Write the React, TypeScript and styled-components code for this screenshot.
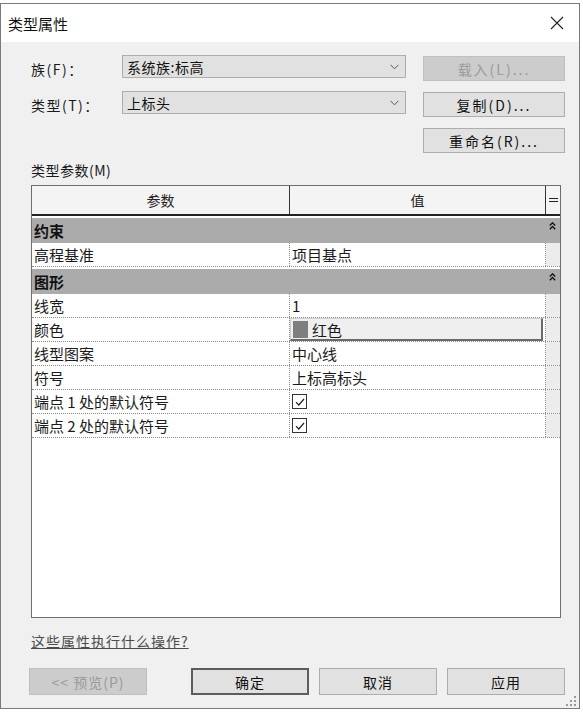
import React from 'react';
import styled, { createGlobalStyle } from 'styled-components';

const GlobalStyle = createGlobalStyle`
  html, body {
    margin: 0;
    padding: 0;
    background: #ffffff;
  }
  body {
    font-family: "Noto Sans CJK SC", "Noto Sans", sans-serif;
    color: #1a1a1a;
  }
`;

type Param = { name: string; value?: string; kind?: 'text' | 'color' | 'check' };

const groups: { title: string; rows: Param[] }[] = [
  { title: '约束', rows: [{ name: '高程基准', value: '项目基点' }] },
  {
    title: '图形',
    rows: [
      { name: '线宽', value: '1' },
      { name: '颜色', value: '红色', kind: 'color' },
      { name: '线型图案', value: '中心线' },
      { name: '符号', value: '上标高标头' },
      { name: '端点 1 处的默认符号', kind: 'check' },
      { name: '端点 2 处的默认符号', kind: 'check' },
    ],
  },
];

const App: React.FC = () => {
  return (
    <>
      <GlobalStyle />
      <Window>
        <TitleBar>
          <Title>类型属性</Title>
          <CloseButton>
            <svg width="14" height="14" viewBox="0 0 14 14">
              <path d="M1 1 L13 13 M13 1 L1 13" stroke="#222" strokeWidth="1.1" fill="none" />
            </svg>
          </CloseButton>
        </TitleBar>
        <Body>
          <TopGrid>
            <FieldLabel>族(F)：</FieldLabel>
            <Combo>
              <span>系统族:标高</span>
              <Chevron />
            </Combo>
            <SideButton disabled>载入(L)...</SideButton>

            <FieldLabel>类型(T)：</FieldLabel>
            <Combo>
              <span>上标头</span>
              <Chevron />
            </Combo>
            <SideButton>复制(D)...</SideButton>

            <span />
            <span />
            <SideButton>重命名(R)...</SideButton>
          </TopGrid>

          <SectionLabel>类型参数(M)</SectionLabel>

          <Table>
            <HeaderRow>
              <HeadCell>参数</HeadCell>
              <HeadCell>值</HeadCell>
              <HeadCell $narrow>
                <svg width="9" height="8" viewBox="0 0 9 8">
                  <path d="M0 2.5 H9 M0 5.5 H9" stroke="#222" strokeWidth="1" />
                </svg>
              </HeadCell>
            </HeaderRow>
            {groups.map((g) => (
              <React.Fragment key={g.title}>
                <GroupRow>
                  <GroupTitle>{g.title}</GroupTitle>
                  <CollapseIcon />
                </GroupRow>
                {g.rows.map((r) => (
                  <Row key={r.name}>
                    <NameCell>{r.name}</NameCell>
                    <ValueCell>
                      {r.kind === 'color' ? (
                        <ColorBox>
                          <Swatch />
                          {r.value}
                        </ColorBox>
                      ) : r.kind === 'check' ? (
                        <CheckBox>
                          <svg width="12" height="12" viewBox="0 0 12 12">
                            <path d="M2 6.2 L4.8 9 L10 3" stroke="#222" strokeWidth="1.2" fill="none" />
                          </svg>
                        </CheckBox>
                      ) : (
                        r.value
                      )}
                    </ValueCell>
                    <EndCell />
                  </Row>
                ))}
              </React.Fragment>
            ))}
          </Table>

          <HelpLink>这些属性执行什么操作?</HelpLink>

          <ButtonRow>
            <DialogButton disabled>&lt;&lt; 预览(P)</DialogButton>
            <DialogButton $primary>确定</DialogButton>
            <DialogButton>取消</DialogButton>
            <DialogButton>应用</DialogButton>
          </ButtonRow>
        </Body>
        <SizeGrip>
          <svg width="12" height="12" viewBox="0 0 12 12">
            {[
              [9, 1], [9, 5], [5, 5], [9, 9], [5, 9], [1, 9],
            ].map(([x, y]) => (
              <rect key={`${x}-${y}`} x={x} y={y} width="2" height="2" fill="#9a9a9a" />
            ))}
          </svg>
        </SizeGrip>
      </Window>
    </>
  );
};

export default App;

const Chevron: React.FC = () => (
  <svg width="9" height="6" viewBox="0 0 9 6">
    <path d="M0.5 0.8 L4.5 4.8 L8.5 0.8" stroke="#555" strokeWidth="1" fill="none" />
  </svg>
);

const CollapseIcon: React.FC = () => (
  <CaretWrap>
    <svg width="7" height="8" viewBox="0 0 7 8">
      <path d="M0.8 3.5 L3.5 0.8 L6.2 3.5 M0.8 7.2 L3.5 4.5 L6.2 7.2" stroke="#111" strokeWidth="1.3" fill="none" />
    </svg>
  </CaretWrap>
);

// Styled Components

const Window = styled.div`
  position: relative;
  box-sizing: border-box;
  margin-top: 3px;
  width: 580px;
  height: 706px;
  border: 1px solid #7a7a7a;
  display: flex;
  flex-direction: column;
  background: #f0f0f0;
`;

const TitleBar = styled.div`
  height: 38px;
  background: #ffffff;
  display: flex;
  align-items: center;
  justify-content: space-between;
  padding: 0 15px 0 7px;
`;

const Title = styled.div`
  font-size: 15px;
  color: #111;
`;

const CloseButton = styled.div`
  display: flex;
  align-items: center;
`;

const Body = styled.div`
  flex: 1;
  padding: 14px 14px 0 29px;
`;

const TopGrid = styled.div`
  display: grid;
  grid-template-columns: 92px 284px 159px;
  grid-template-rows: 25px 25px 25px;
  row-gap: 11px;
  align-items: center;
`;

const FieldLabel = styled.div`
  font-size: 14px;
  letter-spacing: 1.5px;
  color: #1a1a1a;
  padding-left: 1px;
`;

const Combo = styled.div`
  box-sizing: border-box;
  height: 23px;
  align-self: start;
  margin-top: -1px;
  background: #e1e1e1;
  border: 1px solid #adadad;
  display: flex;
  align-items: center;
  justify-content: space-between;
  padding: 0 6px 0 4px;
  font-size: 14px;
  letter-spacing: 0.5px;
  color: #111;
`;

const SideButton = styled.button`
  justify-self: end;
  box-sizing: border-box;
  height: 25px;
  width: 142px;
  background: ${(p) => (p.disabled ? '#cccccc' : '#e1e1e1')};
  border: 1px solid ${(p) => (p.disabled ? '#bfbfbf' : '#adadad')};
  color: ${(p) => (p.disabled ? '#9a9a9a' : '#111')};
  font-family: inherit;
  font-size: 14px;
  letter-spacing: 2px;
  padding: 0;
`;

const SectionLabel = styled.div`
  margin-top: 7px;
  line-height: 20px;
  font-size: 14px;
  letter-spacing: 0.5px;
  padding-left: 1px;
`;

const Table = styled.div`
  box-sizing: border-box;
  margin-top: 5px;
  margin-left: 1px;
  width: 530px;
  height: 433px;
  background: #ffffff;
  border: 1px solid #6e6e6e;
  overflow: hidden;
`;

const columns = '258px 256px 14px';

const HeaderRow = styled.div`
  display: grid;
  grid-template-columns: ${columns};
  height: 28px;
  border-bottom: 2px solid #222;
  background: #f4f4f4;
`;

const HeadCell = styled.div<{ $narrow?: boolean }>`
  display: flex;
  align-items: center;
  justify-content: center;
  font-size: 14px;
  color: #222;
  border-right: ${(p) => (p.$narrow ? 'none' : '1px solid #333')};
`;

const GroupRow = styled.div`
  margin-top: 2px;
  height: 25px;
  background: #ababab;
  display: flex;
  align-items: center;
  justify-content: space-between;
  padding: 0 4px 0 2px;
`;

const GroupTitle = styled.span`
  font-size: 15px;
  font-weight: bold;
  color: #111;
`;

const CaretWrap = styled.span`
  display: flex;
  align-self: flex-start;
  margin-top: 4px;
`;

const Row = styled.div`
  display: grid;
  grid-template-columns: ${columns};
  height: 24px;
  border-bottom: 1px dotted #8a8a8a;
  box-sizing: border-box;
`;

const NameCell = styled.div`
  display: flex;
  align-items: center;
  padding-left: 2px;
  font-size: 15px;
  color: #1a1a1a;
  border-right: 1px dotted #8a8a8a;
  white-space: nowrap;
`;

const ValueCell = styled.div`
  display: flex;
  align-items: center;
  padding-left: 2px;
  font-size: 15px;
  color: #1a1a1a;
  border-right: 1px dotted #8a8a8a;
`;

const EndCell = styled.div`
  background: #ececec;
`;

const ColorBox = styled.div`
  box-sizing: border-box;
  margin-left: -2px;
  width: 100%;
  height: 23px;
  display: flex;
  align-items: center;
  gap: 4px;
  padding-left: 2px;
  background: #efefef;
  border: 1px solid #cfcfcf;
  border-right: 2px solid #6a6a6a;
  border-bottom: 2px solid #6a6a6a;
`;

const Swatch = styled.span`
  width: 15px;
  height: 17px;
  background: #7e7e7e;
`;

const CheckBox = styled.span`
  box-sizing: border-box;
  width: 15px;
  height: 15px;
  border: 1px solid #333;
  background: #fff;
  display: flex;
  align-items: center;
  justify-content: center;
`;

const HelpLink = styled.a`
  display: block;
  margin-top: 13px;
  line-height: 20px;
  font-size: 14px;
  letter-spacing: 1px;
  color: #4a4a4a;
  text-decoration: underline;
  padding-left: 1px;
`;

const ButtonRow = styled.div`
  margin-top: 17px;
  margin-left: -1px;
  display: flex;
  gap: 10px;
`;

const DialogButton = styled.button<{ $primary?: boolean }>`
  box-sizing: border-box;
  width: 118px;
  height: 27px;
  padding: 0;
  font-family: inherit;
  font-size: 14px;
  letter-spacing: 1px;
  background: ${(p) => (p.disabled ? '#cccccc' : '#e1e1e1')};
  color: ${(p) => (p.disabled ? '#9a9a9a' : '#111')};
  border: ${(p) => (p.$primary ? '2px solid #5c5c5c' : p.disabled ? '1px solid #bfbfbf' : '1px solid #adadad')};

  &:first-child {
    margin-right: 34px;
  }
`;

const SizeGrip = styled.div`
  position: absolute;
  right: 2px;
  bottom: 1px;
  display: flex;
`;
